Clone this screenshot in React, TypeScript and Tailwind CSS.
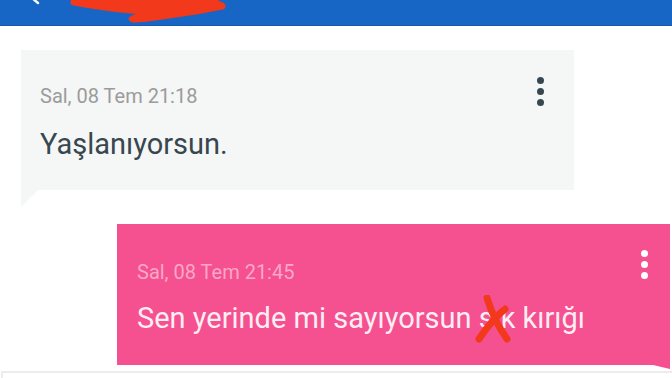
import * as React from "react";

function Dots({ className }: { className: string }) {
  return (
    <div className="flex flex-col items-center gap-[4px] pt-[1px]">
      <span className={`h-[7px] w-[7px] rounded-full ${className}`} />
      <span className={`h-[7px] w-[7px] rounded-full ${className}`} />
      <span className={`h-[7px] w-[7px] rounded-full ${className}`} />
    </div>
  );
}

function Header() {
  return (
    <div className="relative h-[26px] w-full overflow-hidden border-b border-[#1259b0] bg-[#1766c6]">
      {/* back arrow tip */}
      <svg className="absolute left-[30px] top-[-8px]" width="14" height="14" viewBox="0 0 14 14">
        <path d="M2 6 L8 11" stroke="#ffffff" strokeWidth="2.4" strokeLinecap="round" />
      </svg>
      {/* red scribble */}
      <svg className="absolute left-[66px] top-0" width="164" height="26" viewBox="0 0 164 26">
        <path
          d="M6 0 L150 0 C158 2 160 6 156 9 C142 13 120 16 100 19 C86 21 74 23 66 22 C60 20 62 16 70 14 C50 12 30 10 14 6 C6 4 3 2 6 0 Z"
          fill="#f2391b"
        />
        <path
          d="M8 2 C30 7 54 6 78 10 M68 19 C96 16 128 11 156 6 M60 4 C90 8 120 6 150 3"
          stroke="#f2391b"
          strokeWidth="7"
          fill="none"
          strokeLinecap="round"
        />
      </svg>
    </div>
  );
}

export default function App() {
  return (
    <div
      className="h-[378px] w-[672px] overflow-hidden bg-white"
      style={{ fontFamily: "Roboto, 'Noto Sans', sans-serif" }}
    >
      <Header />

      {/* received */}
      <div className="relative ml-[21px] mt-[24px] h-[140px] w-[553px] bg-[#f5f6f6]">
        <div className="flex justify-between pl-[19px] pr-[30px] pt-[35px]">
          <div className="flex flex-col">
            <span className="text-[20px] leading-[22px] text-[#9b9b9b]">Sal, 08 Tem 21:18</span>
            <span className="mt-[20px] text-[29px] leading-[34px] text-[#37474f]">Yaşlanıyorsun.</span>
          </div>
          <div className="-mt-[9px]">
            <Dots className="bg-[#37474f]" />
          </div>
        </div>
        <span className="absolute left-0 top-full h-0 w-0 border-r-[17px] border-t-[17px] border-r-transparent border-t-[#f5f6f6]" />
      </div>

      {/* sent */}
      <div className="relative ml-[117px] mt-[34px] h-[141px] w-[553px] bg-[#f5508f]">
        <div className="flex justify-between pl-[20px] pr-[22px] pt-[37px]">
          <div className="flex flex-col">
            <span className="text-[20px] leading-[22px] text-[#fba7c8]">Sal, 08 Tem 21:45</span>
            <span className="relative mt-[18px] text-[29px] leading-[34px] text-[#fdeef4]">
              Sen yerinde mi sayıyorsun <span className="relative">s<span className="opacity-0">i</span>k
                <svg className="absolute left-[-4px] top-[-6px]" width="38" height="48" viewBox="0 0 38 48">
                  <path d="M12 3 C16 16 22 30 32 44 M4 44 C12 32 20 22 30 14" stroke="#f2391b" strokeWidth="7" fill="none" strokeLinecap="round" />
                </svg>
              </span> kırığı
            </span>
          </div>
          <div className="-mt-[12px]">
            <Dots className="bg-[#ffffff]" />
          </div>
        </div>
        <span className="absolute right-0 top-full h-0 w-0 border-l-[17px] border-t-[4px] border-l-transparent border-t-[#f5508f]" />
      </div>

      <div className="ml-[1px] mt-[6px] h-[20px] border-l-2 border-t-2 border-[#ececec]" />
    </div>
  );
}
